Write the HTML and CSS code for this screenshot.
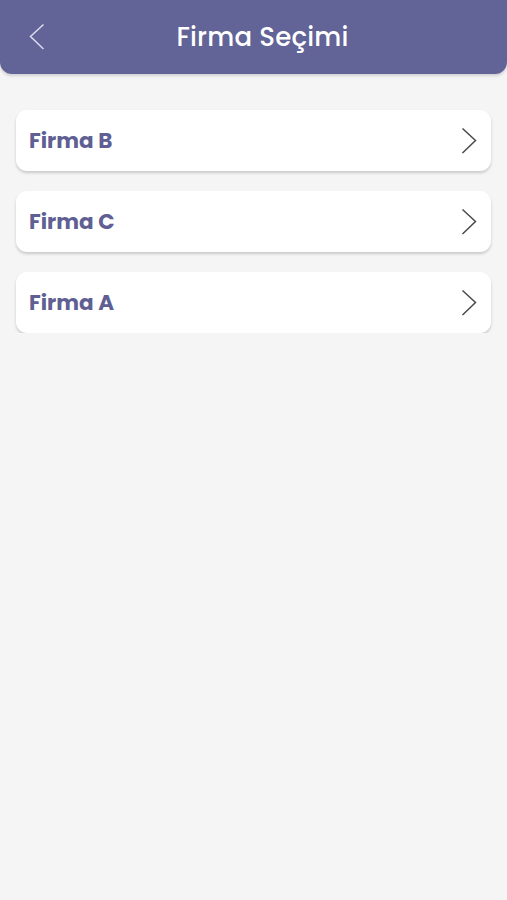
FILE: index.html
```html
<!DOCTYPE html>
<html lang="tr">

<head>
    <meta charset="UTF-8">
    <meta name="viewport" content="width=device-width, initial-scale=1.0">
    <title>Firma Seçimi</title>
    <link rel="stylesheet" href="styles.css">
</head>

<body>
    <div class="header">
        <button class="back">
            <svg width="16" height="28" viewBox="0 0 16 28">
                <polyline points="14.5,1.5 1.5,13.5 14.5,26" fill="none" stroke="#dcdcef" stroke-width="1.5" />
            </svg>
        </button>
        <h1>Firma Seçimi</h1>
    </div>
    <div class="list">
        <div class="item">
            <span>Firma B</span>
            <svg width="16" height="28" viewBox="0 0 16 28">
                <polyline points="1.5,1.5 14.5,13.5 1.5,26" fill="none" stroke="#4a4a4a" stroke-width="1.5" />
            </svg>
        </div>
        <div class="item">
            <span>Firma C</span>
            <svg width="16" height="28" viewBox="0 0 16 28">
                <polyline points="1.5,1.5 14.5,13.5 1.5,26" fill="none" stroke="#4a4a4a" stroke-width="1.5" />
            </svg>
        </div>
        <div class="item">
            <span>Firma A</span>
            <svg width="16" height="28" viewBox="0 0 16 28">
                <polyline points="1.5,1.5 14.5,13.5 1.5,26" fill="none" stroke="#4a4a4a" stroke-width="1.5" />
            </svg>
        </div>
    </div>
</body>

</html>
```

FILE: styles.css
```css
body {
    margin: 0;
    background: #f5f5f5;
    font-family: Poppins, Inter, "Noto Sans", sans-serif;
}

.header {
    height: 74px;
    background: #626396;
    border-radius: 0 0 12px 12px;
    box-shadow: 0 2px 3px rgba(0, 0, 0, 0.15);
    display: flex;
    align-items: center;
    justify-content: center;
    position: relative;
}

.header h1 {
    margin: 0 0 0 18px;
    color: #fff;
    font-size: 26px;
    font-weight: 500;
    letter-spacing: 0.2px;
}

.back {
    position: absolute;
    left: 29px;
    top: 23px;
    padding: 0;
    border: none;
    background: none;
    display: flex;
}

.list {
    padding: 36px 16px 0;
    display: flex;
    flex-direction: column;
    gap: 20px;
}

.item {
    height: 61px;
    background: #fff;
    border-radius: 11px;
    box-shadow: 0 2px 3px rgba(0, 0, 0, 0.18);
    display: flex;
    align-items: center;
    justify-content: space-between;
    padding: 0 14px 0 13px;
}

.item span {
    color: #5f5f94;
    font-size: 21.5px;
    font-weight: 700;
}

.item svg {
    display: block;
}
```
